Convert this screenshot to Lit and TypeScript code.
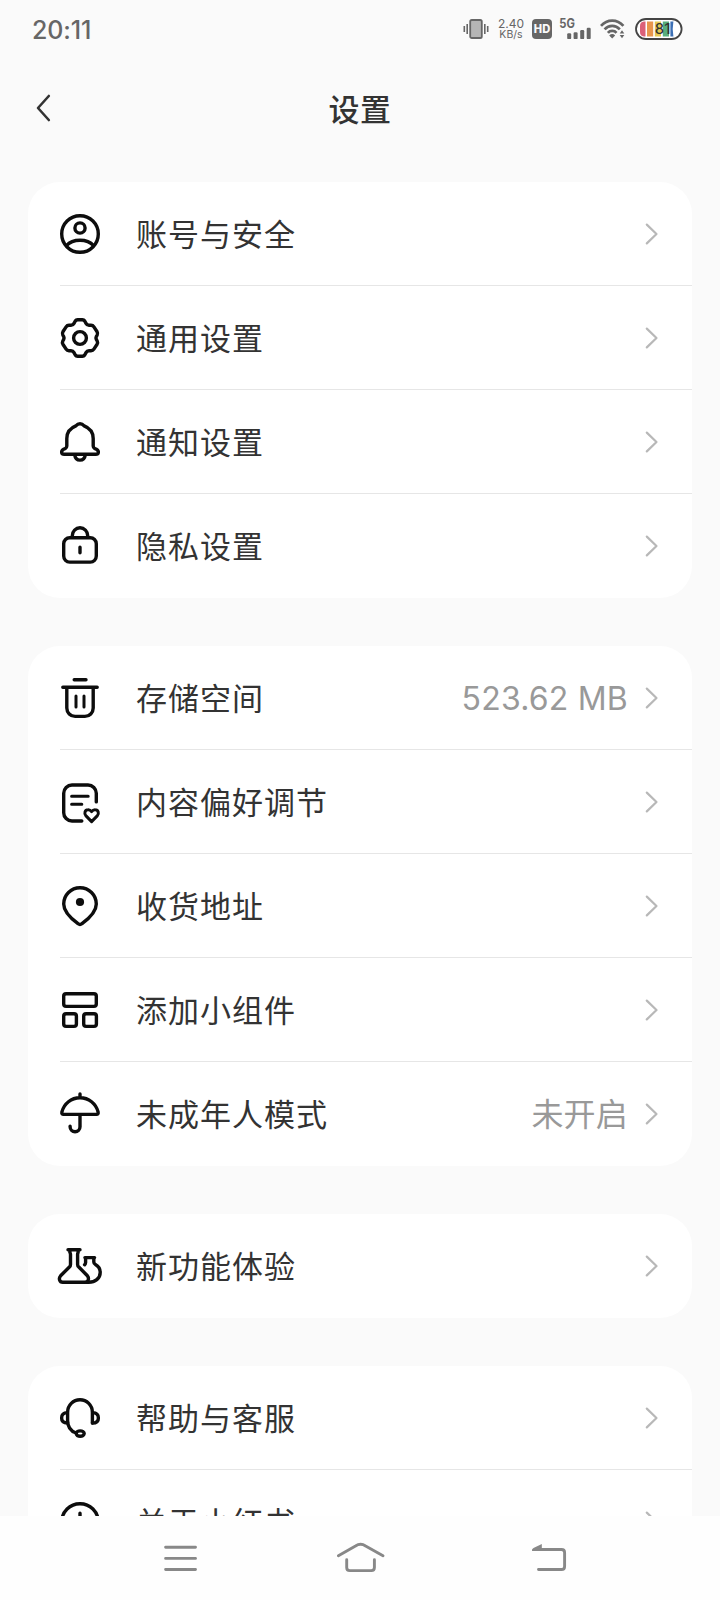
import { LitElement, html, css, svg, nothing } from "lit";
import { customElement, property } from "lit/decorators.js";

const icons: Record<string, unknown> = {
  account: svg`<circle cx="24" cy="24" r="18.3"/><circle cx="24" cy="18" r="5.1"/>
    <path d="M10.4 35.6C13.6 32 18.4 30.2 24 30.2s10.4 1.8 13.6 5.4"/>`,
  cog: svg`<path d="M21.6 5.700H26.400Q27.900 5.700 28.700 7L30 9.400Q31 11.300 33 11.300H35Q36.900 11.300 37.900 12.900L41.100 17.800Q42 19.400 41.200 21L40.300 22.600Q39.600 24 40.300 25.400L41.200 27Q42 28.600 41.100 30.200L37.900 35.100Q36.900 36.700 35 36.700H33Q31 36.700 30 38.600L28.700 41Q27.900 42.300 26.400 42.300H21.600Q20.100 42.300 19.300 41L18 38.600Q17 36.700 15 36.700H13Q11.100 36.700 10.100 35.100L6.900 30.200Q6 28.600 6.800 27L7.700 25.400Q8.400 24 7.700 22.600L6.800 21Q6 19.400 6.900 17.800L10.100 12.900Q11.100 11.300 13 11.300H15Q17 11.300 18 9.400L19.300 7Q20.100 5.700 21.600 5.700Z"/><circle cx="24" cy="24" r="6.400"/>`,
  bell: svg`<path d="M20.3 7.6C22 5.2 26 5.2 27.7 7.6C33.2 9.8 37.2 14.4 37.2 20.4V28Q37.2 29.7 38.6 30.4L40.4 31.3C43.4 33 42.8 36.3 39.8 36.3H8.2C5.2 36.3 4.6 33 7.6 31.3L9.4 30.4Q10.8 29.7 10.8 28V20.4C10.8 14.4 14.800 9.8 20.3 7.6Z"/>
    <path d="M18.8 37.2C19.7 43.8 28.3 43.8 29.2 37.2"/>`,
  lock: svg`<rect x="7.7" y="15.7" width="32.6" height="24.4" rx="6"/>
    <path d="M16.3 15v-1.3a7.7 7.9 0 0 1 15.4 0V15M24 25.2v5.6"/>`,
  trash: svg`<path d="M18.2 5.7h11.8M6.8 13.3h34.4M10.8 13.5v20.6a8.3 8.3 0 0 0 8.3 8.3h9.8a8.3 8.3 0 0 0 8.3-8.3V13.5"/>
    <path stroke-width="3" d="M20 22v11M28 22v11"/>`,
  note: svg`<path d="M25.8 43H16a8.3 8.3 0 0 1-8.3-8.3V15.3A8.3 8.3 0 0 1 16 7h16a8.3 8.3 0 0 1 8.3 8.3v8.6"/>
    <path stroke-width="3" d="M15.6 18.2h16.6M15.6 26.2h10.2"/>
    <path stroke-width="3" d="M35.6 43.6L30 37.9C27.7 35.4 29 31.8 32 31.7C33.7 31.6 34.8 32.5 35.6 33.6C36.4 32.5 37.5 31.6 39.2 31.7C42.2 31.8 43.5 35.4 41.2 37.9Z"/>`,
  pin: svg`<path d="M7.7 22a16.3 16.3 0 0 1 32.6 0C40.3 30.2 32.6 36.8 26 41.7Q24 43.1 22 41.7C15.4 36.8 7.7 30.2 7.7 22Z"/>
    <circle class="solid" cx="24" cy="20" r="4.1"/>`,
  widgets: svg`<rect x="7.7" y="7.7" width="32.6" height="12.7" rx="2.4"/>
    <rect x="7.7" y="27.7" width="12.7" height="12.7" rx="2.4"/><rect x="27.7" y="27.7" width="12.7" height="12.7" rx="2.4"/>`,
  umbrella: svg`<path d="M24 4v3.5M7.6 24.4H40.4Q42.6 24.3 42.1 22C40 13.6 32.8 7.8 24 7.8S8 13.6 5.9 22Q5.4 24.3 7.6 24.4ZM24 25v11.8a4.95 4.95 0 0 1-9.9 0v-.6"/>`,
  flask: svg`<path d="M12 7.7H24M13.9 8v2.4q.6 1 .6 2V22.4Q14.5 24 13.4 25L4.6 33.8C2.4 36.2 3.4 40.3 6.8 40.3H29C32.4 40.3 33.4 36.2 31.4 33.8L22.8 25Q21.6 24 21.6 22.4V12.4q0-1 .5-2V8"/>
    <path d="M30 40.3h2.8C39 40.3 44.2 36.6 44.2 30.4C44.2 26.6 42.4 24 39.4 22.4Q37.8 21.6 37.8 20V15.6M28.9 15.6H38.6M29.6 15.8V20.6Q29.6 22 28.6 22.8"/>`,
  headset: svg`<path d="M36.4 29V18.2C36.4 11.2 30.8 5.8 24 5.8S11.6 11.2 11.6 18.2V26.4C11.6 33 15 37.2 20.2 39"/>
    <path d="M11.4 18.6C7.8 18.8 5.6 20.8 5.6 23.9S7.8 28.8 11.6 29M36.6 18.6C40.2 18.8 42.4 20.8 42.4 23.9S40.2 29 36.4 29"/>
    <ellipse cx="24.2" cy="39.6" rx="4" ry="2.7"/>`,
  info: svg`<circle cx="24" cy="24" r="18.3"/><path d="M24 15.2v5M24 25v9"/>`,
};

@customElement("line-icon")
class LineIcon extends LitElement {
  static styles = css`
    :host { display: block; width: 48px; height: 48px; flex: none; }
    svg { display: block; fill: none; stroke: #0d0d0d; stroke-width: 3.4; stroke-linecap: round; stroke-linejoin: round; }
    .solid { fill: #0d0d0d; stroke: none; }
  `;
  @property() name = "";
  render() {
    return html`<svg width="48" height="48" viewBox="0 0 48 48">${icons[this.name]}</svg>`;
  }
}

@customElement("status-bar")
class StatusBar extends LitElement {
  static styles = css`
    :host { display: flex; height: 58px; align-items: center; padding: 0 37px 0 32px; color: #666; font-family: Inter, sans-serif; }
    .time { flex: 1; font-size: 25px; line-height: 30px; font-weight: 500; letter-spacing: -0.1px; padding-top: 1px; }
    .speed { width: 26px; margin: 0 8px 0 9px; font-size: 12px; line-height: 11px; text-align: center; white-space: nowrap; }
    .speed div:last-child { font-size: 10.5px; }
    svg { display: block; flex: none; }
    .hd { font: 800 11.5px Inter, sans-serif; fill: #fafafa; }
    .net { font: 700 12.5px Inter, sans-serif; fill: #666; }
    .pct { font: 500 14px Inter, sans-serif; fill: #333; }
  `;
  render() {
    return html`
      <div class="time">20:11</div>
      <svg width="26" height="22" viewBox="0 0 26 22">
        <rect x="7.2" y="2" width="11.6" height="18" rx="1.6" fill="#b5b5b5" stroke="#666" stroke-width="1.8"/>
        <path d="M1.300 8v6M4.200 6v10M21.800 6v10M24.700 8v6" stroke="#666" stroke-width="1.600"/>
      </svg>
      <div class="speed"><div>2.40</div><div>KB/s</div></div>
      <svg width="20" height="20" viewBox="0 0 20 20">
        <rect width="20" height="20" rx="4" fill="#666"/>
        <text class="hd" x="1.800" y="14.200" textLength="16.400" lengthAdjust="spacingAndGlyphs">HD</text>
      </svg>
      <svg width="48" height="26" viewBox="0 -2 48 26">
        <text class="net" x="7.300" y="10.400" textLength="15.600" lengthAdjust="spacingAndGlyphs">5G</text>
        <g fill="#666">
          <rect x="15.200" y="15.300" width="4" height="5.800" rx="1.200"/>
          <rect x="21.600" y="14.200" width="4" height="6.900" rx="1.200"/>
          <rect x="28.200" y="12" width="4" height="9.100" rx="1.200"/>
          <rect x="34.700" y="9.800" width="4" height="11.300" rx="1.200"/>
        </g>
      </svg>
      <svg width="26" height="22" viewBox="0 0 26 22">
        <g fill="none" stroke="#666" stroke-width="2.700">
          <path d="M1 7.800C7.200 .800 17.200 .800 23.400 7.800"/>
          <path d="M4.600 11.400C8.800 6.700 15.600 6.700 19.800 11.400"/>
          <path d="M7.900 14.800C10 12.200 14.400 12.200 16.500 14.800"/>
        </g>
        <path d="M9.200 17.400Q12.200 14.600 15.200 17.400L12.200 20.400Z" fill="#666"/>
        <path d="M19.700 15.400l2.300-3.200 2.300 3.200zM19.700 17l2.300 3.200 2.300-3.200z" fill="#666"/>
      </svg>
      <svg width="57" height="24" viewBox="-9 0 57 24">
        <rect x="1" y="2" width="45.600" height="20" rx="10" fill="#fff" stroke="#444" stroke-width="1.800"/>
        <path d="M10.500 4.500v15H9A4.500 4.500 0 0 1 5 15V9A4.500 4.500 0 0 1 9 4.500Z" fill="#dc6079"/>
        <rect x="12" y="4.500" width="6.200" height="15" fill="#e8964c"/>
        <rect x="19.800" y="4.500" width="6.200" height="15" fill="#e6c84f"/>
        <rect x="27.800" y="4.500" width="6.200" height="15" fill="#58ae7c"/>
        <path d="M35.400 4.500h3q-1.400 7.500 0 15h-3z" fill="#3d70b5"/>
        <text class="pct" x="19.800" y="17" textLength="15.500" lengthAdjust="spacingAndGlyphs">81</text>
      </svg>
    `;
  }
}

@customElement("setting-row")
class SettingRow extends LitElement {
  static styles = css`
    :host { display: flex; align-items: center; box-sizing: border-box; height: 104px; padding: 0 28px; }
    .label { flex: 1; margin-left: 32px; font-size: 31px; line-height: 44px; letter-spacing: 1px; color: #333; padding-bottom: 2px; }
    .value { font-family: Inter, "Noto Sans CJK SC", sans-serif; font-size: 32px; line-height: 44px; letter-spacing: 0.2px; color: #999; margin-right: 12px; padding-top: 2px; white-space: nowrap; }
    svg { display: block; flex: none; }
  `;
  @property() icon = "";
  @property() label = "";
  @property() value = "";
  render() {
    return html`
      <line-icon .name=${this.icon}></line-icon>
      <div class="label">${this.label}</div>
      ${this.value ? html`<div class="value">${this.value}</div>` : nothing}
      <svg width="24" height="24" viewBox="0 0 24 24">
        <path d="M6.800 2.600L16.500 12L6.800 21.400" fill="none" stroke="#b8b8b8" stroke-width="2.200" stroke-linecap="round" stroke-linejoin="round"/>
      </svg>
    `;
  }
}

const groups: { icon: string; label: string; value?: string }[][] = [
  [
    { icon: "account", label: "账号与安全" },
    { icon: "cog", label: "通用设置" },
    { icon: "bell", label: "通知设置" },
    { icon: "lock", label: "隐私设置" },
  ],
  [
    { icon: "trash", label: "存储空间", value: "523.62 MB" },
    { icon: "note", label: "内容偏好调节" },
    { icon: "pin", label: "收货地址" },
    { icon: "widgets", label: "添加小组件" },
    { icon: "umbrella", label: "未成年人模式", value: "未开启" },
  ],
  [{ icon: "flask", label: "新功能体验" }],
  [
    { icon: "headset", label: "帮助与客服" },
    { icon: "info", label: "关于小红书" },
  ],
];

@customElement("app-root")
class AppRoot extends LitElement {
  static styles = css`
    :host { display: flex; flex-direction: column; width: 720px; height: 1600px; overflow: hidden; background: #fafafa; font-family: "Noto Sans CJK SC", sans-serif; color: #333; }
    .header { display: grid; grid-template-columns: 100px 1fr 100px; align-items: center; height: 100px; flex: none; }
    .back { display: block; margin-left: 28px; }
    .title { text-align: center; font-size: 31px; line-height: 44px; font-weight: 500; padding-bottom: 1px; letter-spacing: 0.5px; }
    .list { flex: 1; min-height: 0; overflow: hidden; display: flex; flex-direction: column; gap: 48px; padding: 24px 28px 0; }
    .card { flex: none; background: #fff; border-radius: 32px; overflow: hidden; }
    .line { height: 1px; margin: -1px 0 0 32px; background: #e6e6e6; }
    .nav { flex: none; display: flex; justify-content: center; align-items: center; gap: 120px; height: 84px; background: #fefefe; }
    .nav svg { display: block; fill: none; stroke: #888; stroke-width: 2.900; stroke-linecap: round; stroke-linejoin: round; }
    .nav .tip { fill: #888; stroke: none; }
  `;
  render() {
    return html`
      <status-bar></status-bar>
      <div class="header">
        <svg class="back" width="32" height="32" viewBox="0 0 32 32">
          <path d="M20.800 4L10 16L20.800 28" fill="none" stroke="#333" stroke-width="2.600" stroke-linecap="round" stroke-linejoin="round"/>
        </svg>
        <div class="title">设置</div>
      </div>
      <div class="list">
        ${groups.map(
          (rows) => html`<div class="card">
            ${rows.map(
              (r, i) => html`
                <setting-row .icon=${r.icon} .label=${r.label} .value=${r.value ?? ""}></setting-row>
                ${i < rows.length - 1 ? html`<div class="line"></div>` : nothing}
              `
            )}
          </div>`
        )}
      </div>
      <div class="nav">
        <svg width="60" height="40" viewBox="0 0 60 40"><path d="M15.600 9.300h29.900M15.600 20.400h29.900M15.600 31.500h29.900"/></svg>
        <svg width="60" height="40" viewBox="0 0 60 40">
          <path d="M8.400 17.700L25.500 8Q30.600 4.600 35.600 8L53 17.700M16.700 21.700V29.500Q16.700 32.600 19.800 32.600H41.300Q44.400 32.600 44.400 29.500V21.700"/>
        </svg>
        <svg width="60" height="40" viewBox="0 0 60 40">
          <path d="M28.500 31.500H51.500Q54.600 31.500 54.600 28.400V14.500Q54.600 11.500 51.500 11.500H26"/>
          <path class="tip" d="M22 12.900Q21.500 11 23.500 10L31.800 6V12.900Z"/>
        </svg>
      </div>
    `;
  }
}
